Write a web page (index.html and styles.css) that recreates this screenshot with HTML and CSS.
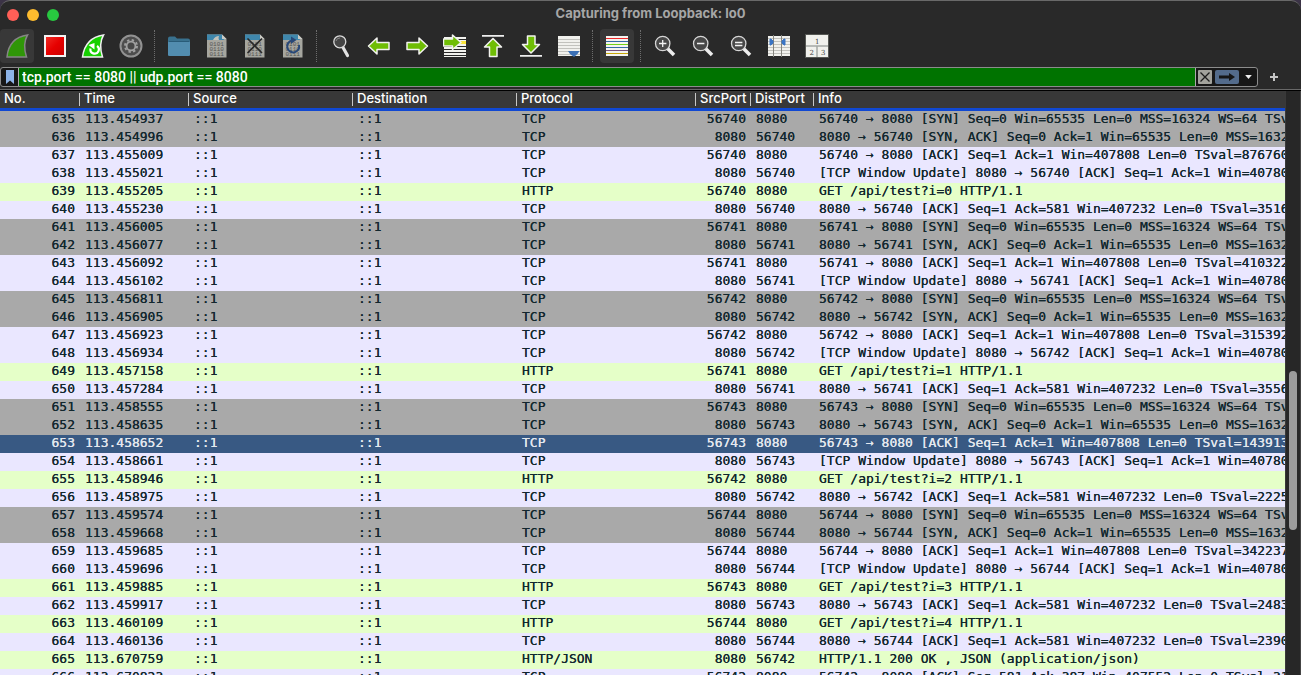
FILE: index.html
```
<!DOCTYPE html>
<html lang="en">
<head>
    <meta charset="UTF-8">
    <meta name="viewport" content="width=device-width, initial-scale=1.0">
    <title>Capturing from Loopback: lo0</title>
    <link rel="stylesheet" href="styles.css">
</head>
<body>
    <div class="window">
        <header class="titlebar">
            <div class="lights">
                <button class="light close" aria-label="Close"></button>
                <button class="light minimize" aria-label="Minimize"></button>
                <button class="light maximize" aria-label="Zoom"></button>
            </div>
            <h1>Capturing from Loopback: lo0</h1>
        </header>

        <nav class="toolbar">
            <button class="tool active" aria-label="Start capture">
                <svg viewBox="0 0 24 24"><path d="M2 23C3 12 9 3 22.5 1C19 7 19 15 21.5 23Z" fill="#2f9608" stroke="#858585" stroke-width="1.5"/></svg>
            </button>
            <button class="tool" aria-label="Stop capture">
                <svg viewBox="0 0 24 24"><defs><linearGradient id="red" x1="0" y1="0" x2="1" y2="1"><stop offset="0" stop-color="#f03028"/><stop offset=".5" stop-color="#e60000"/><stop offset="1" stop-color="#c80000"/></linearGradient></defs><rect x="2" y="2" width="20" height="20" fill="url(#red)" stroke="#f4f4f4" stroke-width="2"/></svg>
            </button>
            <button class="tool" aria-label="Restart capture">
                <svg viewBox="0 0 24 24"><path d="M1.5 23C3 12 9 3 22.5 1C19 7 19 15 21.5 23Z" fill="#16d000" stroke="#f0f0f0" stroke-width="1.5"/><path d="M9.5 14.5a4.2 4.2 0 1 0 6.5-2.5" fill="none" stroke="#fff" stroke-width="2.2"/><path d="M7.5 11L13.5 9V15.5Z" fill="#fff"/></svg>
            </button>
            <button class="tool" aria-label="Capture options">
                <svg viewBox="0 0 24 24"><circle cx="12" cy="12" r="10.5" fill="#4d4d4d" stroke="#929292" stroke-width="2"/><circle cx="12" cy="12" r="6" fill="none" stroke="#a0a0a0" stroke-width="2" stroke-dasharray="2.35 2.36"/><circle cx="12" cy="12" r="4.4" fill="#484848" stroke="#a0a0a0" stroke-width="1.8"/></svg>
            </button>
            <span class="separator"></span>
            <button class="tool" aria-label="Open file">
                <svg viewBox="0 0 24 24"><path d="M1 4.500Q1 2.5 3 2.5H8L10 4.500H21Q23 4.5 23 6.500V20.5Q23 22 21 22H3Q1 22 1 20.5Z" fill="#39718e"/><path d="M1 8H23V20.5Q23 22 21 22H3Q1 22 1 20.5Z" fill="#528daf"/><path d="M2 7.5H22" stroke="#295c78"/></svg>
            </button>
            <button class="tool" aria-label="Save file">
                <svg viewBox="0 0 24 24"><path d="M2 .5H17L21.5 5V23.5H2Z" fill="#a6a69f"/><path d="M2 .5H17L19 6H2Z" fill="#3f87ac"/><path d="M8 6Q10 2 14 2Q13 4 14 6Z" fill="#c2c2bb"/><path d="M17 .5V5H21.5Z" fill="#cbcbc5"/><g class="bits"><text x="4.5" y="11.5">0101</text><text x="4.5" y="16.5">0110</text><text x="4.5" y="21.5">0111</text></g></svg>
            </button>
            <button class="tool" aria-label="Close file">
                <svg viewBox="0 0 24 24"><path d="M2 .5H17L21.5 5V23.5H2Z" fill="#a6a69f"/><path d="M2 .5H17L19 6H2Z" fill="#3f87ac"/><path d="M17 .5V5H21.5Z" fill="#cbcbc5"/><g class="bits"><text x="4.5" y="11.5">0101</text><text x="4.5" y="16.5">0110</text><text x="4.5" y="21.5">0111</text></g><path d="M5 5L18.5 18.5M18.5 5L5 18.5" stroke="#292929" stroke-width="1.7" stroke-linecap="round"/></svg>
            </button>
            <button class="tool" aria-label="Reload file">
                <svg viewBox="0 0 24 24"><path d="M2 .5H17L21.5 5V23.5H2Z" fill="#a6a69f"/><path d="M2 .5H17L19 6H2Z" fill="#3f87ac"/><path d="M17 .5V5H21.5Z" fill="#cbcbc5"/><g class="bits"><text x="4.5" y="11.5">0101</text><text x="4.5" y="16.5">0110</text><text x="4.5" y="21.5">0111</text></g><path d="M11 6.5A6 6 0 1 0 18 11" fill="none" stroke="#284878" stroke-width="2"/><path d="M10 2.5L15.5 6L10 10Z" fill="#284878"/></svg>
            </button>
            <span class="separator"></span>
            <button class="tool" aria-label="Find packet">
                <svg viewBox="0 0 24 24"><path d="M14 13.5L18.5 21.5" stroke="#e2e2e2" stroke-width="3.2" stroke-linecap="round"/><circle cx="10.8" cy="7.8" r="6" fill="#454545" stroke="#d8d8d8" stroke-width="1.3"/><path d="M7 7A4 4 0 0 1 11 4" fill="none" stroke="#888"/></svg>
            </button>
            <button class="tool" aria-label="Previous packet">
                <svg viewBox="0 0 24 24"><path d="M1.5 12L10 4V8.5H22V15.5H10V20Z" class="arrow"/></svg>
            </button>
            <button class="tool" aria-label="Next packet">
                <svg viewBox="0 0 24 24"><path d="M22.5 12L14 4V8.5H2V15.5H14V20Z" class="arrow"/></svg>
            </button>
            <button class="tool" aria-label="Go to packet">
                <svg viewBox="0 0 24 24"><path d="M1 3H23V23H1Z" fill="#f2f2ee"/><path d="M13 7H23V10H13Z" fill="#f9e43c"/><path d="M1 5.5H23M1 12.5H23M1 15.5H23M1 18.5H23M1 21.5H23" stroke="#292929"/><path d="M18 8.5L9.5 1V5H.5V12H9.5V15.5Z" class="arrow"/></svg>
            </button>
            <button class="tool" aria-label="First packet">
                <svg viewBox="0 0 24 24"><path d="M1 1.8H23" stroke="#eee" stroke-width="1.8"/><path d="M12 4.5L20.5 13H16V22.5H8.5V13H3.5Z" class="arrow"/></svg>
            </button>
            <button class="tool" aria-label="Last packet">
                <svg viewBox="0 0 24 24"><path d="M1 21.8H23" stroke="#eee" stroke-width="1.8"/><path d="M12 19L20.5 10.5H16V2H8.5V10.5H3.5Z" class="arrow"/></svg>
            </button>
            <button class="tool" aria-label="Auto scroll">
                <svg viewBox="0 0 24 24"><path d="M1 2H23V22H1Z" fill="#f1f1ed"/><path d="M1 5.5H23M1 8.5H23M1 11.5H23M1 14.5H23M1 17.5H23M1 20.5H23" stroke="#c2c2bd"/><path d="M11 17H22.5L20.5 20L17 23L13 20Z" fill="#3b70b5"/></svg>
            </button>
            <span class="separator"></span>
            <button class="tool active" aria-label="Colorize packets">
                <svg viewBox="0 0 24 24"><path d="M1 2H23V22H1Z" fill="#f4f4f0"/><path d="M1 4.5H23" stroke="#ee2929"/><path d="M1 7.5H23" stroke="#356aa5"/><path d="M1 10.5H23" stroke="#73d216"/><path d="M1 13.5H23" stroke="#356aa5"/><path d="M1 16.5H23" stroke="#75507b"/><path d="M1 19.5H23" stroke="#c8a70a"/></svg>
            </button>
            <span class="separator"></span>
            <button class="tool" aria-label="Zoom in">
                <svg viewBox="0 0 24 24"><path d="M14.5 14.5L21 21" class="handle"/><circle cx="9.7" cy="9.5" r="7.2" class="lens"/><path d="M6 9.5H13.4M9.7 6V13" class="sign"/></svg>
            </button>
            <button class="tool" aria-label="Zoom out">
                <svg viewBox="0 0 24 24"><path d="M14.5 14.5L21 21" class="handle"/><circle cx="9.7" cy="9.5" r="7.2" class="lens"/><path d="M6 9.5H13.4" class="sign"/></svg>
            </button>
            <button class="tool" aria-label="Normal size">
                <svg viewBox="0 0 24 24"><path d="M14.5 14.5L21 21" class="handle"/><circle cx="9.7" cy="9.5" r="7.2" class="lens"/><path d="M6 8.5H13.4M6 11.5H13.4" class="sign"/></svg>
            </button>
            <button class="tool" aria-label="Resize columns">
                <svg viewBox="0 0 24 24"><path d="M1 2H23V22H1Z" fill="#f1f1ed"/><path d="M1 4.5H23M1 7.5H23M1 10.5H23M1 13.5H23M1 16.5H23M1 19.5H23" stroke="#c2c2bd"/><path d="M6.5 1V23M14.5 1V23" stroke="#85857f"/><path d="M3 5H4L6 7V9L4 11H3ZM18 5H17L15 7V9L17 11H18Z" fill="#3b75c4" stroke="#3b75c4"/></svg>
            </button>
            <button class="tool" aria-label="Layout">
                <svg viewBox="0 0 24 24"><path d="M.5 .5H23.5V23.5H.5Z" fill="#f1f1ed" stroke="#555753"/><path d="M1 12H23M12 12V23" stroke="#a4a8a5" stroke-width="1.5"/><g class="panes"><text x="10" y="9.5">1</text><text x="4.5" y="20.5">2</text><text x="16" y="20.5">3</text></g></svg>
            </button>
        </nav>

        <form class="filter-row">
            <div class="filter">
                <button type="button" class="bookmark" aria-label="Bookmarks">
                    <svg viewBox="0 0 10 14"><path d="M1 0H9V14L5 10.5L1 14Z" fill="#8db4e8"/></svg>
                </button>
                <input type="text" class="filter-input" aria-label="Display filter" value="tcp.port == 8080 || udp.port == 8080" spellcheck="false">
                <button type="button" class="clear" aria-label="Clear filter">
                    <svg viewBox="0 0 14 14"><path d="M2.5 2.5L11.5 11.5M11.5 2.5L2.5 11.5" stroke="#1d1d1d" stroke-width="1.3"/></svg>
                </button>
                <button type="button" class="apply" aria-label="Apply filter">
                    <svg viewBox="0 0 24 14"><path d="M4 5.5H14V3L20 7L14 11V8.5H4Z" fill="#161616"/></svg>
                </button>
                <button type="button" class="history" aria-label="Recent filters">
                    <svg viewBox="0 0 18 18"><path d="M5.5 7H12.5L9 11Z" fill="#eee"/></svg>
                </button>
            </div>
            <button type="button" class="add" aria-label="Add filter button">
                <svg viewBox="0 0 12 12"><path d="M6 2V10M2 6H10" stroke="#c4c4c4" stroke-width="2"/></svg>
            </button>
        </form>

        <main class="packets">
            <div class="table-area">
                <table>
                    <colgroup>
                        <col class="col-no">
                        <col class="col-time">
                        <col class="col-address">
                        <col class="col-address">
                        <col class="col-protocol">
                        <col class="col-src">
                        <col class="col-dst">
                        <col>
                    </colgroup>
                    <thead>
                        <tr>
                            <th>No.</th>
                            <th>Time</th>
                            <th>Source</th>
                            <th>Destination</th>
                            <th>Protocol</th>
                            <th>SrcPort</th>
                            <th>DistPort</th>
                            <th>Info</th>
                        </tr>
                    </thead>
                    <tbody id="packet-list"></tbody>
                </table>
            </div>
            <div class="scrollbar"><div class="thumb"></div></div>
        </main>
    </div>
    <script src="script.js"></script>
</body>
</html>
```

FILE: styles.css
```
body {
    margin: 0;
    background-color: #3b3346;
    font-family: Inter, "Liberation Sans", sans-serif;
    font-size: 13px;
    color: #fff;
}

button {
    border: none;
    padding: 0;
    background: none;
    display: flex;
    align-items: center;
    justify-content: center;
}

.window {
    box-sizing: border-box;
    height: 100vh;
    display: flex;
    flex-direction: column;
    overflow: hidden;
    background-color: #292929;
    border-top: 1px solid #696969;
    border-radius: 10px 10px 0 0;
}

/* title bar */
.titlebar {
    height: 28px;
    flex-shrink: 0;
    display: grid;
    grid-template-columns: 1fr auto 1fr;
    align-items: center;
}

.titlebar h1 {
    margin: 0;
    align-self: start;
    font-size: 13px;
    line-height: 24px;
    font-weight: 700;
    color: #a6a6a6;
}

.lights {
    display: flex;
    gap: 8px;
    padding-left: 7px;
}

.light {
    width: 12px;
    height: 12px;
    border-radius: 50%;
}

.close {
    background-color: #ff5f57;
}

.minimize {
    background-color: #febc2e;
}

.maximize {
    background-color: #28c840;
}

/* toolbar */
.toolbar {
    display: flex;
    gap: 4px;
    flex-shrink: 0;
}

.tool {
    width: 34px;
    height: 34px;
    border-radius: 4px;
}

.tool svg {
    width: 24px;
    height: 24px;
}

.tool.active {
    background-color: #383838;
}

.separator {
    width: 3px;
    margin: 1px 0 1px 2px;
    border-left: 1px dotted #6d6d6d;
}

.arrow {
    fill: #6fbd05;
    stroke: #f2f2ee;
    stroke-width: 1.5;
    stroke-linejoin: round;
}

.handle {
    stroke: #ededed;
    stroke-width: 3.5;
}

.lens {
    fill: #484848;
    stroke: #d6d6d6;
    stroke-width: 1.3;
}

.sign {
    stroke: #f2f2f2;
    stroke-width: 1.3;
}

.bits {
    font-family: "Liberation Mono", monospace;
    font-size: 6px;
    fill: #555;
}

.panes {
    font-family: "DejaVu Serif", serif;
    font-size: 7px;
    fill: #444;
}

/* display filter */
.filter-row {
    display: flex;
    flex-shrink: 0;
    padding: 4px 0 2px;
    border-bottom: 1px solid #686868;
}

.filter {
    flex: 1;
    display: flex;
    align-items: center;
    box-sizing: border-box;
    height: 20px;
    border: 1px solid #8c8c8c;
    border-radius: 3px;
    background-color: #171717;
    overflow: hidden;
}

.bookmark {
    width: 17px;
    height: 18px;
}

.bookmark svg {
    width: 10px;
    height: 14px;
}

.filter-input {
    flex: 1;
    min-width: 0;
    box-sizing: border-box;
    height: 18px;
    border: solid #aaa;
    border-width: 0 1px;
    border-radius: 0;
    outline: none;
    padding: 0 3px;
    background-color: #007300;
    color: #fff;
    font-family: Roboto, "Liberation Sans", sans-serif;
    font-size: 14px;
    font-weight: 500;
}

.clear {
    width: 14px;
    height: 14px;
    margin: 0 3px 0 2px;
    border-radius: 1px;
    background-color: #a2a29c;
}

.apply {
    width: 24px;
    height: 14px;
    border-radius: 2px;
    background-color: #536b8b;
}

.clear svg,
.apply svg {
    width: 100%;
    height: 100%;
}

.history {
    width: 18px;
    height: 18px;
    padding-left: 1px;
}

.history svg {
    width: 18px;
    height: 18px;
}

.add {
    width: 32px;
    margin-right: 11px;
}

.add svg {
    width: 12px;
    height: 12px;
}

/* packet list */
.packets {
    flex: 1;
    min-height: 0;
    display: flex;
    border-top: 1px solid #000;
}

.table-area {
    flex: 1;
    min-width: 0;
    overflow: hidden;
}

table {
    width: 100%;
    table-layout: fixed;
    border-collapse: separate;
    border-spacing: 0;
}

.col-no {
    width: 80px;
}

.col-time {
    width: 109px;
}

.col-address {
    width: 164px;
}

.col-protocol {
    width: 179px;
}

.col-src {
    width: 55px;
}

.col-dst {
    width: 63px;
}

th {
    height: 17px;
    padding: 0 0 0 4px;
    background: linear-gradient(#c8c8c8, #c8c8c8) right 2px / 1px 13px no-repeat #383838;
    border-bottom: 3px solid #1048d2;
    line-height: 14px;
    font-weight: 500;
    text-align: left;
    vertical-align: top;
    white-space: nowrap;
}

th:last-child {
    background: #383838;
}

td {
    height: 18px;
    padding: 0 5px;
    overflow: hidden;
    font-family: "DejaVu Sans Mono", monospace;
    font-size: 13px;
    line-height: 16px;
    vertical-align: top;
    white-space: pre;
    color: #12272e;
    text-shadow: 0 0 0 currentColor;
}

td:last-child {
    padding-right: 0;
}

td:nth-child(1),
td:nth-child(6) {
    text-align: right;
}

.syn {
    background-color: #a9a9a9;
}

.tcp {
    background-color: #eae7ff;
}

.http {
    background-color: #e5ffc8;
}

.selected {
    background-color: #385983;
}

.selected td {
    color: #e4e8ee;
}

.scrollbar {
    width: 16px;
    box-sizing: border-box;
    padding: 280px 4px 0;
    border-left: 1px solid #393939;
    border-right: 1px solid #444;
    background-color: #272727;
}

.thumb {
    width: 8px;
    height: 159px;
    margin-left: -1px;
    border-radius: 4px;
    background-color: #9b9b9b;
}
```

FILE: script.js
```
// number, time, protocol, source port, destination port, info, row class
const packets = [
    [635, "113.454937", "TCP", 56740, 8080, "[SYN] Seq=0 Win=65535 Len=0 MSS=16324 WS=64 TSv", "syn"],
    [636, "113.454996", "TCP", 8080, 56740, "[SYN, ACK] Seq=0 Ack=1 Win=65535 Len=0 MSS=1632", "syn"],
    [637, "113.455009", "TCP", 56740, 8080, "[ACK] Seq=1 Ack=1 Win=407808 Len=0 TSval=876760", "tcp"],
    [638, "113.455021", "TCP", 8080, 56740, "update", "tcp"],
    [639, "113.455205", "HTTP", 56740, 8080, "GET /api/test?i=0 HTTP/1.1", "http"],
    [640, "113.455230", "TCP", 8080, 56740, "[ACK] Seq=1 Ack=581 Win=407232 Len=0 TSval=3516", "tcp"],
    [641, "113.456005", "TCP", 56741, 8080, "[SYN] Seq=0 Win=65535 Len=0 MSS=16324 WS=64 TSv", "syn"],
    [642, "113.456077", "TCP", 8080, 56741, "[SYN, ACK] Seq=0 Ack=1 Win=65535 Len=0 MSS=1632", "syn"],
    [643, "113.456092", "TCP", 56741, 8080, "[ACK] Seq=1 Ack=1 Win=407808 Len=0 TSval=410322", "tcp"],
    [644, "113.456102", "TCP", 8080, 56741, "update", "tcp"],
    [645, "113.456811", "TCP", 56742, 8080, "[SYN] Seq=0 Win=65535 Len=0 MSS=16324 WS=64 TSv", "syn"],
    [646, "113.456905", "TCP", 8080, 56742, "[SYN, ACK] Seq=0 Ack=1 Win=65535 Len=0 MSS=1632", "syn"],
    [647, "113.456923", "TCP", 56742, 8080, "[ACK] Seq=1 Ack=1 Win=407808 Len=0 TSval=315392", "tcp"],
    [648, "113.456934", "TCP", 8080, 56742, "update", "tcp"],
    [649, "113.457158", "HTTP", 56741, 8080, "GET /api/test?i=1 HTTP/1.1", "http"],
    [650, "113.457284", "TCP", 8080, 56741, "[ACK] Seq=1 Ack=581 Win=407232 Len=0 TSval=3556", "tcp"],
    [651, "113.458555", "TCP", 56743, 8080, "[SYN] Seq=0 Win=65535 Len=0 MSS=16324 WS=64 TSv", "syn"],
    [652, "113.458635", "TCP", 8080, 56743, "[SYN, ACK] Seq=0 Ack=1 Win=65535 Len=0 MSS=1632", "syn"],
    [653, "113.458652", "TCP", 56743, 8080, "[ACK] Seq=1 Ack=1 Win=407808 Len=0 TSval=143913", "selected"],
    [654, "113.458661", "TCP", 8080, 56743, "update", "tcp"],
    [655, "113.458946", "HTTP", 56742, 8080, "GET /api/test?i=2 HTTP/1.1", "http"],
    [656, "113.458975", "TCP", 8080, 56742, "[ACK] Seq=1 Ack=581 Win=407232 Len=0 TSval=2225", "tcp"],
    [657, "113.459574", "TCP", 56744, 8080, "[SYN] Seq=0 Win=65535 Len=0 MSS=16324 WS=64 TSv", "syn"],
    [658, "113.459668", "TCP", 8080, 56744, "[SYN, ACK] Seq=0 Ack=1 Win=65535 Len=0 MSS=1632", "syn"],
    [659, "113.459685", "TCP", 56744, 8080, "[ACK] Seq=1 Ack=1 Win=407808 Len=0 TSval=342237", "tcp"],
    [660, "113.459696", "TCP", 8080, 56744, "update", "tcp"],
    [661, "113.459885", "HTTP", 56743, 8080, "GET /api/test?i=3 HTTP/1.1", "http"],
    [662, "113.459917", "TCP", 8080, 56743, "[ACK] Seq=1 Ack=581 Win=407232 Len=0 TSval=2483", "tcp"],
    [663, "113.460109", "HTTP", 56744, 8080, "GET /api/test?i=4 HTTP/1.1", "http"],
    [664, "113.460136", "TCP", 8080, 56744, "[ACK] Seq=1 Ack=581 Win=407232 Len=0 TSval=2390", "tcp"],
    [665, "113.670759", "HTTP/JSON", 8080, 56742, "HTTP/1.1 200 OK , JSON (application/json)", "http"],
    [666, "113.670823", "TCP", 56742, 8080, "[ACK] Seq=581 Ack=387 Win=407552 Len=0 TSval=31", "tcp"]
];

function getInfo(protocol, src, dst, info) {
    if (protocol !== "TCP") {
        return info;
    }
    if (info === "update") {
        return `[TCP Window Update] ${src} → ${dst} [ACK] Seq=1 Ack=1 Win=40780`;
    }
    return `${src} → ${dst} ${info}`;
}

const list = document.getElementById("packet-list");

packets.forEach(([no, time, protocol, src, dst, info, type]) => {
    const row = document.createElement("tr");
    row.className = type;
    const cells = [no, time, "::1", "::1", protocol, src, dst, getInfo(protocol, src, dst, info)];
    cells.forEach(value => {
        const cell = document.createElement("td");
        cell.textContent = value;
        row.appendChild(cell);
    });
    list.appendChild(row);
});
```
